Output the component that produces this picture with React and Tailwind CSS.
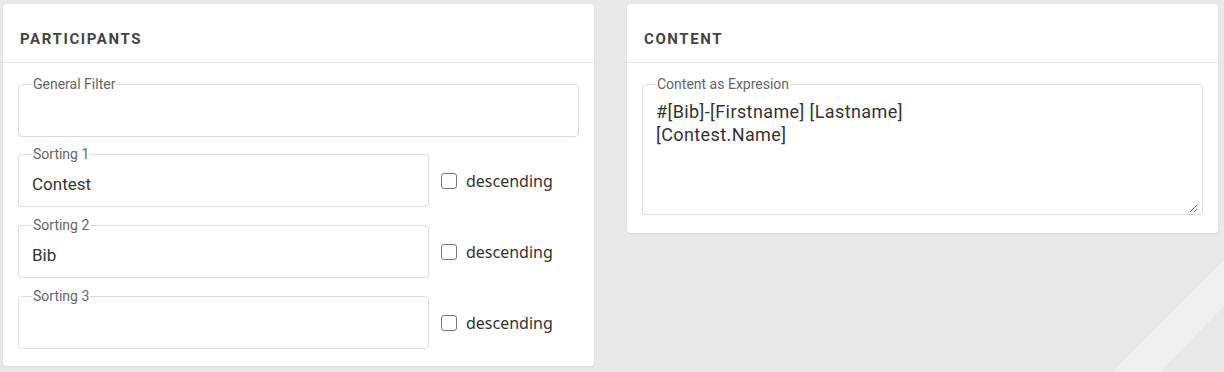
import React from 'react';

const din = { fontFamily: 'Roboto, "Liberation Sans", sans-serif' };

const Card = ({ title, children, tight }) => (
    <section className="w-[591px] bg-white rounded-[4px] shadow-[0_1px_2px_rgba(0,0,0,0.08)]">
        <header className="h-[59px] border-b border-[#e6e6e6] px-[17px] pt-[25px]">
            <h2 className="text-[15px] leading-5 font-bold tracking-[1.6px] text-[#444]" style={din}>{title}</h2>
        </header>
        <div className={`px-[15px] pt-[13px] flex flex-col gap-[9px] ${tight ? 'pb-[17px]' : 'pb-[18px]'}`}>{children}</div>
    </section>
);

const Field = ({ label, value, className = '' }) => (
    <fieldset className={`border border-[#dcdcdc] rounded-[4px] px-[13px] min-w-0 ${className}`}>
        <legend className="px-[1px] text-[14px] leading-4 text-[#666]" style={din}>{label}</legend>
        <input
            readOnly
            value={value}
            className="w-full h-[44px] pb-[1px] outline-none bg-transparent text-[17px] text-[#333]"
            style={din}
        />
    </fieldset>
);

const SortRow = ({ label, value, first }) => (
    <div className={`flex items-center ${first ? '' : 'pt-[1px]'}`}>
        <Field label={label} value={value} className="w-[411px]" />
        <label className="flex items-center gap-[9px] ml-[12px] mt-[8px]">
            <span className="w-4 h-4 border border-[#777] rounded-[3px] bg-white" />
            <span className="text-[16px] text-[#333]" style={{ fontFamily: '"Noto Sans", "Open Sans", sans-serif' }}>descending</span>
        </label>
    </div>
);

export default function App() {
    return (
        <div className="relative h-[372px] overflow-hidden bg-[#e8e8e8]">
            {/* background stripe */}
            <svg className="absolute inset-0" width="1224" height="372">
                <polygon points="1224,260 1112,372 1160,372 1224,306" fill="#efefef" />
            </svg>

            <div className="relative flex items-start gap-[33px] pl-[3px] pt-[4px]">
                <Card title="PARTICIPANTS" tight>
                    <Field label="General Filter" value="" />
                    <SortRow label="Sorting 1" value="Contest" first />
                    <SortRow label="Sorting 2" value="Bib" />
                    <SortRow label="Sorting 3" value="" />
                </Card>

                <Card title="CONTENT">
                    <fieldset className="border border-[#dcdcdc] rounded-[4px] pl-[13px] pr-[4px] pb-[1px] min-w-0">
                        <legend className="px-[1px] text-[14px] leading-4 text-[#666]" style={din}>Content as Expresion</legend>
                        <textarea
                            readOnly
                            value={'#[Bib]-[Firstname] [Lastname]\n[Contest.Name]'}
                            className="block w-full h-[121px] pt-[8px] outline-none bg-transparent text-[18px] leading-[23px] tracking-[0.4px] text-[#333] resize-y"
                            style={din}
                        />
                    </fieldset>
                </Card>
            </div>
        </div>
    );
}
